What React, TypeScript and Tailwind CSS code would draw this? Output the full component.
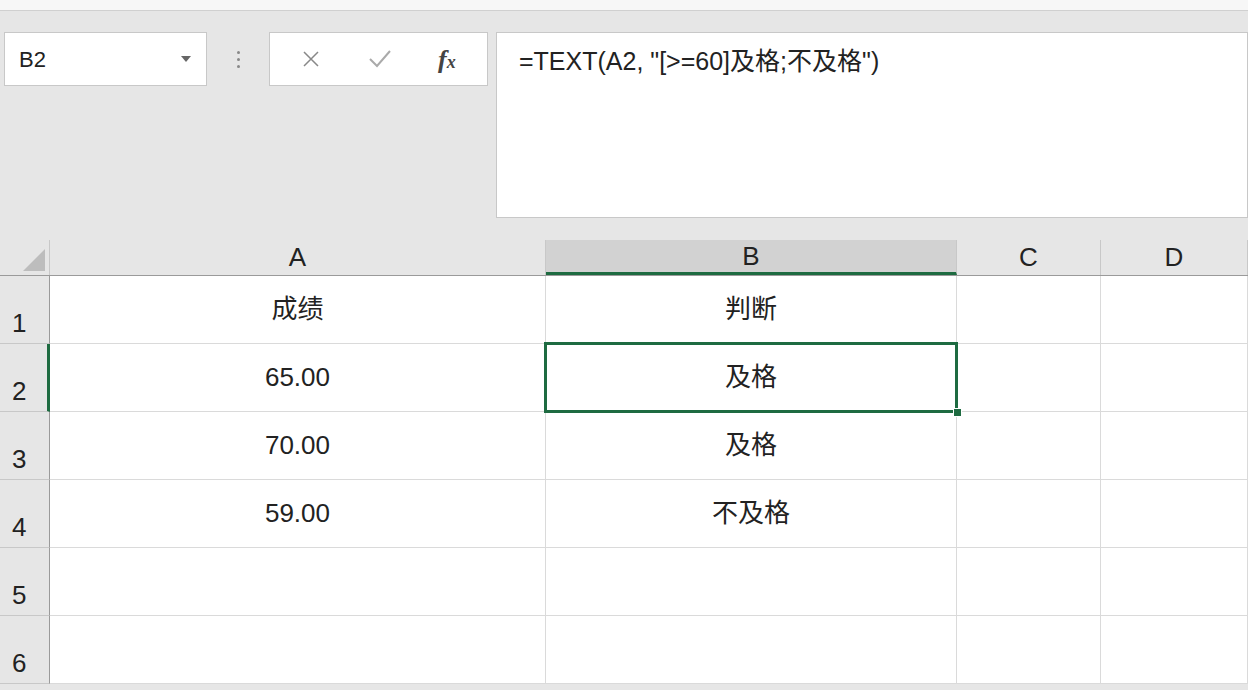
import React from "react";

const cols = [
  { k: "A", w: "w-[496px]" },
  { k: "B", w: "w-[411px]" },
  { k: "C", w: "w-[144px]" },
  { k: "D", w: "w-[147px]" },
];
const rows = [
  ["成绩", "判断"],
  ["65.00", "及格"],
  ["70.00", "及格"],
  ["59.00", "不及格"],
  ["", ""],
  ["", ""],
];

export default function App() {
  return (
    <div className="w-[1248px] h-[690px] overflow-hidden bg-[#e6e6e6] text-[#222]" style={{ fontFamily: '"Liberation Sans","Noto Sans CJK SC",sans-serif' }}>
      <div className="h-[11px] bg-[#f7f7f7] border-b border-[#d0d0d0]" />
      <div className="flex pt-[21px] h-[229px]">
        <div className="ml-[4px] w-[203px] h-[54px] bg-white border border-[#c8c8c8] flex items-center justify-between px-[14px]">
          <span className="text-[22px]">B2</span>
          <svg width="12" height="8" viewBox="0 0 12 8"><path d="M1 1 L11 1 L6 7Z" fill="#666" /></svg>
        </div>
        <div className="w-[62px] h-[54px] flex flex-col items-center justify-center gap-[4px]">
          <div className="w-[3px] h-[3px] rounded-full bg-[#888]" />
          <div className="w-[3px] h-[3px] rounded-full bg-[#888]" />
          <div className="w-[3px] h-[3px] rounded-full bg-[#888]" />
        </div>
        <div className="w-[219px] h-[54px] bg-white border border-[#c8c8c8] flex items-center justify-around px-[8px]">
          <svg width="20" height="20" viewBox="0 0 20 20"><path d="M3 3 L17 17 M17 3 L3 17" stroke="#888" strokeWidth="1.5" /></svg>
          <svg width="24" height="20" viewBox="0 0 24 20"><path d="M2 10 L9 17 L22 2" stroke="#aaa" strokeWidth="2" fill="none" /></svg>
          <span className="italic font-bold text-[26px] text-[#444]" style={{ fontFamily: '"Liberation Serif",serif' }}>f<span className="text-[18px]">x</span></span>
        </div>
        <div className="ml-[8px] flex-1 h-[186px] bg-white border border-[#c8c8c8] px-[22px] pt-[10px] text-[25px]">
          =TEXT(A2, "[&gt;=60]及格;不及格")
        </div>
      </div>
      <div className="flex h-[36px] bg-[#e6e6e6] border-b border-[#9a9a9a]">
        <div className="w-[50px] border-r border-[#c8c8c8] flex items-end justify-end p-[4px]">
          <svg width="24" height="24" viewBox="0 0 24 24"><path d="M24 2 L24 24 L2 24Z" fill="#bdbdbd" /></svg>
        </div>
        {cols.map((c) => (
          <div key={c.k} className={`${c.w} border-r border-[#c8c8c8] flex items-center justify-center text-[26px] ${c.k === "B" ? "bg-[#d2d2d2] border-b-[3px] border-b-[#1e6b41]" : ""}`}>
            {c.k}
          </div>
        ))}
      </div>
      {rows.map((r, i) => (
        <div key={i} className="flex h-[68px]">
          <div className={`w-[50px] bg-[#e6e6e6] border-b border-[#c8c8c8] flex items-end px-[12px] pb-0 text-[26px] ${i === 1 ? "border-r-[3px] border-r-[#1e6b41] bg-[#d2d2d2]" : "border-r border-r-[#9a9a9a]"}`}>
            {i + 1}
          </div>
          {cols.map((c, j) => (
            <div key={c.k} className={`${c.w} relative bg-white border-r border-b border-[#dadada] flex items-center justify-center text-[26px]`}>
              {j < 2 ? r[j] : ""}
              {i === 1 && j === 1 && (
                <>
                  <div className="absolute z-10 inset-[-2px] border-[3px] border-[#1e6b41]" />
                  <div className="absolute z-20 right-[-6px] bottom-[-6px] w-[9px] h-[9px] bg-[#1e6b41] border border-white" />
                </>
              )}
            </div>
          ))}
        </div>
      ))}
    </div>
  );
}
